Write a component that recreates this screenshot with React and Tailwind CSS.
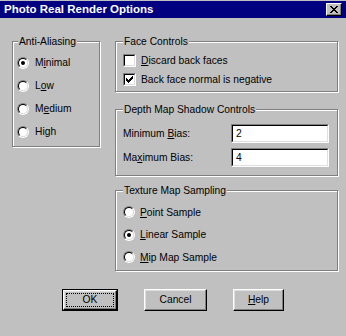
import React from 'react';

const font = { fontFamily: '"Liberation Sans", Arial, sans-serif' };

// Etched group box with its caption sitting on the top border
const GroupBox = ({ title, className, labelClass, children }) => (
  <div
    className={`relative border border-[#808080] shadow-[1px_1px_0_#ffffff,inset_1px_1px_0_#ffffff] ${className}`}
  >
    <span className={`absolute top-[-7px] h-[13px] leading-[13px] bg-[#c0c0c0] px-[1px] ${labelClass}`}>
      {title}
    </span>
    {children}
  </div>
);

const Radio = ({ checked }) => (
  <span className="w-[12px] h-[12px] rounded-full border border-t-[#808080] border-l-[#808080] border-b-white border-r-white flex shrink-0">
    <span className="w-full h-full rounded-full border border-t-black border-l-black border-b-[#dfdfdf] border-r-[#dfdfdf] bg-white flex items-center justify-center">
      {checked && <span className="w-[4px] h-[4px] rounded-full bg-black" />}
    </span>
  </span>
);

const Checkbox = ({ checked }) => (
  <span className="w-[13px] h-[13px] border border-t-[#808080] border-l-[#808080] border-b-white border-r-white flex shrink-0">
    <span className="w-full h-full border border-t-black border-l-black border-b-[#dfdfdf] border-r-[#dfdfdf] bg-white flex items-center justify-center">
      {checked && (
        <svg width="7" height="7" viewBox="0 0 7 7" shapeRendering="crispEdges">
          <path
            d="M6 0h1v1H6zM5 1h2v1H5zM0 2h1v1H0zM4 2h3v1H4zM0 3h2v1H0zM3 3h3v1H3zM0 4h5v1H0zM1 5h3v1H1zM2 6h1v1H2z"
            fill="#000"
          />
        </svg>
      )}
    </span>
  </span>
);

const Sunken = ({ value }) => (
  <div className="w-[98px] h-[19px] border border-t-[#808080] border-l-[#808080] border-b-white border-r-white">
    <div className="w-full h-full border border-t-black border-l-black border-b-[#dfdfdf] border-r-[#dfdfdf] bg-white pl-[3px] leading-[15px]">
      {value}
    </div>
  </div>
);

const Button = ({ children, width, isDefault }) => {
  if (isDefault) {
    return (
      <div className={`${width} h-[22px] border border-black flex`}>
        <div className="flex-1 border border-t-white border-l-white border-b-black border-r-black shadow-[inset_-1px_-1px_0_#808080,inset_1px_1px_0_#dfdfdf] flex items-center justify-center p-[2px]">
          <div className="w-full h-full border border-dotted border-black flex items-center justify-center">
            {children}
          </div>
        </div>
      </div>
    );
  }
  return (
    <div
      className={`${width} h-[22px] border border-t-white border-l-white border-b-black border-r-black shadow-[inset_-1px_-1px_0_#808080,inset_1px_1px_0_#dfdfdf] flex items-center justify-center`}
    >
      {children}
    </div>
  );
};

const App = () => {
  const antiAliasing = [
    { label: <>M<u>i</u>nimal</>, checked: true },
    { label: <>L<u>o</u>w</>, checked: false },
    { label: <>M<u>e</u>dium</>, checked: false },
    { label: <>High</>, checked: false },
  ];
  const sampling = [
    { label: <><u>P</u>oint Sample</>, checked: false },
    { label: <><u>L</u>inear Sample</>, checked: true },
    { label: <><u>M</u>ip Map Sample</>, checked: false },
  ];

  return (
    <div className="w-[346px] h-[336px] bg-[#c0c0c0] flex flex-col text-[10.25px] text-black" style={font}>
      {/* Title bar */}
      <div className="mt-[1px] h-[17px] bg-[#000080] flex items-center justify-between pl-[4px] pr-[4px]">
        <span className="text-white font-bold text-[11.5px] leading-none">Photo Real Render Options</span>
        <div className="w-[16px] h-[13px] bg-[#c0c0c0] border border-t-white border-l-white border-b-black border-r-black shadow-[inset_-1px_-1px_0_#808080] flex items-center justify-center">
          <svg width="8" height="7" viewBox="0 0 8 7" shapeRendering="crispEdges">
            <path
              d="M0 0h2v1H0zM6 0h2v1H6zM1 1h2v1H1zM5 1h2v1H5zM2 2h4v1H2zM3 3h2v1H3zM2 4h4v1H2zM1 5h2v1H1zM5 5h2v1H5zM0 6h2v1H0zM6 6h2v1H6z"
              fill="#000"
            />
          </svg>
        </div>
      </div>

      {/* Groups */}
      <div className="flex pl-[12px] mt-[23px]">
        <GroupBox title="Anti-Aliasing" className="w-[88px] h-[106px] pt-[9px] pl-[4px]" labelClass="left-[5px]">
          {antiAliasing.map((o, i) => (
            <div key={i} className="h-[23px] flex items-center gap-[6px]">
              <Radio checked={o.checked} />
              <span>{o.label}</span>
            </div>
          ))}
        </GroupBox>

        <div className="ml-[15px] w-[223px] flex flex-col">
          <GroupBox title="Face Controls" className="h-[51px] pt-[9px] pl-[7px]" labelClass="left-[7px]">
            <div className="h-[19px] flex items-center gap-[5px]">
              <Checkbox checked={false} />
              <span><u>D</u>iscard back faces</span>
            </div>
            <div className="h-[19px] flex items-center gap-[5px]">
              <Checkbox checked={true} />
              <span>Back face normal is negative</span>
            </div>
          </GroupBox>

          <GroupBox title="Depth Map Shadow Controls" className="mt-[17px] h-[67px] pt-[14px] pl-[7px] pr-[8px]" labelClass="left-[7px]">
            <div className="flex items-center justify-between">
              <span>Minimum <u>B</u>ias:</span>
              <Sunken value="2" />
            </div>
            <div className="flex items-center justify-between mt-[5px]">
              <span>Ma<u>x</u>imum Bias:</span>
              <Sunken value="4" />
            </div>
          </GroupBox>

          <GroupBox title="Texture Map Sampling" className="mt-[14px] h-[81px] pt-[10px] pl-[7px]" labelClass="left-[7px]">
            {sampling.map((o, i) => (
              <div key={i} className="h-[22.5px] flex items-center gap-[5px]">
                <Radio checked={o.checked} />
                <span>{o.label}</span>
              </div>
            ))}
          </GroupBox>
        </div>
      </div>

      {/* Buttons */}
      <div className="flex pl-[62px] gap-[26px] mt-[18px]">
        <Button width="w-[56px]" isDefault>OK</Button>
        <Button width="w-[63px]">Cancel</Button>
        <Button width="w-[51px]"><span><u>H</u>elp</span></Button>
      </div>
    </div>
  );
};

export default App;
